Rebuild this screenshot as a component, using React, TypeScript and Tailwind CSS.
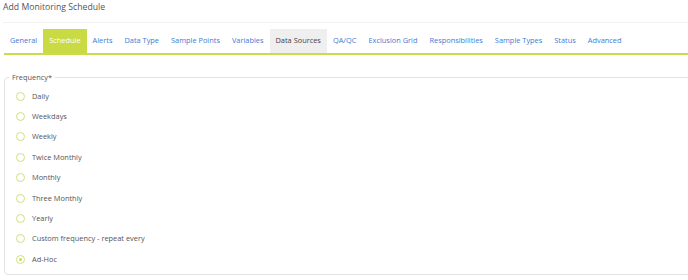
const tabs = [
  'General',
  'Schedule',
  'Alerts',
  'Data Type',
  'Sample Points',
  'Variables',
  'Data Sources',
  'QA/QC',
  'Exclusion Grid',
  'Responsibilities',
  'Sample Types',
  'Status',
  'Advanced',
];

const options = [
  'Daily',
  'Weekdays',
  'Weekly',
  'Twice Monthly',
  'Monthly',
  'Three Monthly',
  'Yearly',
  'Custom frequency - repeat every',
  'Ad-Hoc',
];

export default function App() {
  return (
    <div className="w-[688px] h-[280px] bg-white overflow-hidden font-['Open_Sans',sans-serif] text-[#555]">
      <div className="px-[3px] pt-[1px] h-[22px] text-[8.7px] text-[#555]">Add Monitoring Schedule</div>
      <div className="ml-[3px] h-[1px] bg-[#f2f2f2]" />

      {/* tabs */}
      <div className="mt-[6px] ml-[4px] flex border-b-2 border-[#cbdc4a] h-[26px]">
        {tabs.map((t) => {
          const active = t === 'Schedule';
          const hover = t === 'Data Sources';
          return (
            <div
              key={t}
              className={
                'px-[6px] h-[24px] flex items-center text-[7.4px] ' +
                (active
                  ? 'bg-[#c9da45] text-white'
                  : hover
                  ? 'bg-[#efefef] text-[#444]'
                  : 'text-[#4479d4]')
              }
            >
              {t}
            </div>
          );
        })}
      </div>

      {/* frequency */}
      <fieldset className="mt-[17px] ml-[4px] w-[700px] h-[203px] border border-[#e2e2e2] rounded-[4px] px-[11px] pt-[4px]">
        <legend className="ml-[-7px] px-[3px] text-[7.4px] text-[#555] leading-[10px]">Frequency*</legend>
        <div className="flex flex-col">
          {options.map((o) => (
            <label key={o} className="h-[20.375px] flex items-center gap-[7px] text-[7.4px] text-[#555]">
              <span className="w-[9px] h-[9px] rounded-full border border-[#d3df7c] flex items-center justify-center">
                {o === 'Ad-Hoc' && <span className="w-[3px] h-[3px] rounded-full bg-[#c9d95c]" />}
              </span>
              {o}
            </label>
          ))}
        </div>
      </fieldset>
    </div>
  );
}
